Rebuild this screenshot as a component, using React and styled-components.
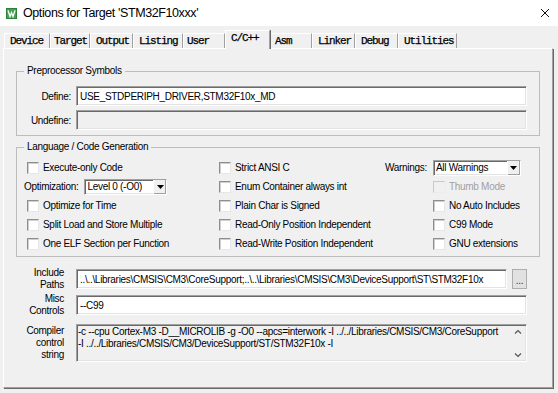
import React from 'react';
import styled, { createGlobalStyle } from 'styled-components';

const GlobalStyle = createGlobalStyle`
  html, body {
    margin: 0;
    padding: 0;
    background: #f0f0f0;
  }
  body {
    font-family: 'Liberation Sans', Arial, sans-serif;
    color: #000;
  }
`

const Window = styled.div`
  width: 558px;
  height: 393px;
  background: #f0f0f0;
  display: flex;
  flex-direction: column;
  overflow: hidden;
  font-size: 10px;
  letter-spacing: -0.3px;
`

const TitleBar = styled.div`
  height: 26px;
  flex: none;
  box-sizing: border-box;
  background: #fff;
  display: flex;
  align-items: center;
  padding: 0 8px 0 6px;
`

const TitleText = styled.span`
  flex: 1;
  margin-left: 6px;
  font-size: 12.5px;
  letter-spacing: -0.4px;
  color: #000;
`

const TabStrip = styled.div`
  height: 22px;
  flex: none;
  display: flex;
  align-items: flex-end;
  padding-left: 4px;
`

const Tab = styled.div`
  width: ${p => p.$width}px;
  height: ${p => (p.$active ? 19 : 15)}px;
  margin-bottom: ${p => (p.$active ? -1 : 0)}px;
  box-sizing: border-box;
  padding: 1px 0 0 ${p => p.$pad}px;
  border-top: 1px solid #fff;
  border-left: 1px solid #fff;
  border-right: 1px solid #a0a0a0;
  box-shadow: ${p => (p.$active ? '1px 0 0 #696969' : 'none')};
  background: #f0f0f0;
  position: relative;
  z-index: ${p => (p.$active ? 2 : 0)};
  font-family: 'Liberation Mono', 'Courier New', monospace;
  font-size: 11px;
  line-height: 12px;
  letter-spacing: -1.1px;
  color: #000;
  -webkit-text-stroke: 0.25px #000;
  white-space: nowrap;
`

const Page = styled.div`
  flex: 1;
  margin: 0 5px 5px 3px;
  border-top: 1px solid #fff;
  border-left: 1px solid #fff;
  border-right: 1px solid #a0a0a0;
  border-bottom: 1px solid #a0a0a0;
  box-shadow: 1px 1px 0 #696969;
  padding: 16px 12px 0 12px;
  display: flex;
  flex-direction: column;
`

const GroupBox = styled.fieldset`
  margin: ${p => p.$top || 0}px 0 0 0;
  padding: 0;
  min-width: 0;
  border: 1px solid #bdbdbd;
`

const GroupTitle = styled.legend`
  margin-left: 7px;
  padding: 0 3px;
  line-height: 12px;
  font-size: 10px;
`

const FieldList = styled.div`
  display: flex;
  flex-direction: column;
  gap: 4px;
  padding: 9px 12px 5px 0;
`

const FieldRow = styled.div`
  display: flex;
  align-items: center;
  gap: 5px;
`

const FieldLabel = styled.span`
  width: ${p => p.$width}px;
  flex: none;
  text-align: right;
`

const sunken = `
  box-sizing: border-box;
  border-style: solid;
  border-width: 1px;
  border-color: #a0a0a0 #fff #fff #a0a0a0;
  box-shadow: inset 1px 1px 0 #696969, inset -1px -1px 0 #e3e3e3;
`

const TextBox = styled.div`
  ${sunken}
  flex: 1;
  min-width: 0;
  height: 20px;
  padding: 0 3px;
  display: flex;
  align-items: center;
  background: ${p => (p.$disabled ? '#f0f0f0' : '#fff')};
  white-space: nowrap;
  overflow: hidden;
`

const OptionGrid = styled.div`
  display: grid;
  grid-template-columns: 195px 166px 1fr;
  grid-auto-rows: 19px;
  padding: 5px 0 3px 7px;
`

const CheckRow = styled.div`
  display: flex;
  align-items: center;
  gap: 4px;
  padding-left: ${p => p.$indent || 0}px;
  color: ${p => (p.$disabled ? '#a0a0a0' : '#000')};
  white-space: nowrap;
`

const CheckBox = styled.span`
  width: 12px;
  height: 12px;
  flex: none;
  box-sizing: border-box;
  border: 1px solid;
  border-color: ${p => (p.$disabled ? '#c8c8c8 #ececec #ececec #c8c8c8' : '#8e8e8e #e6e6e6 #e6e6e6 #8e8e8e')};
  box-shadow: ${p => (p.$disabled ? 'none' : 'inset 1px 1px 0 #cfcfcf')};
  background: ${p => (p.$disabled ? '#f0f0f0' : '#fff')};
`

const ComboRow = styled.div`
  display: flex;
  align-items: center;
  gap: 6px;
  white-space: nowrap;
`

const Combo = styled.div`
  ${sunken}
  width: ${p => p.$width}px;
  height: 16px;
  display: flex;
  background: #fff;
`

const ComboValue = styled.span`
  flex: 1;
  padding-left: 2px;
  line-height: 14px;
  white-space: nowrap;
  overflow: hidden;
`

const ComboButton = styled.span`
  width: 13px;
  flex: none;
  box-sizing: border-box;
  background: #f0f0f0;
  border-left: 1px solid #fff;
  box-shadow: inset -1px -1px 0 #a0a0a0;
  display: flex;
  align-items: center;
  justify-content: center;
`

const BottomRow = styled.div`
  display: flex;
  align-items: center;
  gap: 12px;
  margin-top: ${p => p.$top}px;
  padding-right: 13px;
`

const SideLabel = styled.div`
  width: 48px;
  flex: none;
  text-align: right;
  line-height: 12px;
`

const BrowseButton = styled.div`
  width: 15px;
  height: 20px;
  flex: none;
  margin-left: -7px;
  box-sizing: border-box;
  background: #e1e1e1;
  border: 1px solid #adadad;
  display: flex;
  align-items: flex-end;
  justify-content: center;
  padding-bottom: 3px;
  line-height: 8px;
  color: #333;
`

const StringBox = styled.div`
  ${sunken}
  flex: 1;
  min-width: 0;
  height: 38px;
  display: flex;
  background: #f0f0f0;
`

const StringText = styled.div`
  flex: 1;
  min-width: 0;
  padding: 1px 0 0 1px;
  line-height: 12px;
  white-space: pre;
  overflow: hidden;
`

const ScrollTrack = styled.div`
  width: 17px;
  flex: none;
  display: flex;
  flex-direction: column;
  justify-content: space-between;
  align-items: center;
  padding: 4px 0 3px;
  box-sizing: border-box;
`

const KeilIcon = () => (
  <svg width="11" height="11" viewBox="0 0 11 11">
    <rect width="11" height="11" fill="#2d7f3a" />
    <rect x="1" y="1" width="9" height="9" fill="#44a152" />
    <path d="M2 2.5 L4 8.5 L5.5 4.5 L7 8.5 L9 2.5" fill="none" stroke="#fff" strokeWidth="1.3" />
  </svg>
)

const CloseIcon = () => (
  <svg width="10" height="10" viewBox="0 0 10 10">
    <path d="M1 1 L9 9 M9 1 L1 9" stroke="#111" strokeWidth="1" />
  </svg>
)

const DownArrow = () => (
  <svg width="7" height="4" viewBox="0 0 7 4">
    <polygon points="0,0 7,0 3.5,4" fill="#000" />
  </svg>
)

const Chevron = ({ up }) => (
  <svg width="8" height="5" viewBox="0 0 8 5">
    <polyline
      points={up ? '1,4.5 4,1.5 7,4.5' : '1,0.5 4,3.5 7,0.5'}
      fill="none"
      stroke="#555"
      strokeWidth="1.2"
    />
  </svg>
)

// widths and text offsets read off the reference tab strip
const tabs = [
  { name: 'Device', width: 46, pad: 5 },
  { name: 'Target', width: 40, pad: 3 },
  { name: 'Output', width: 43, pad: 5 },
  { name: 'Listing', width: 50, pad: 5 },
  { name: 'User', width: 42, pad: 3 },
  { name: 'C/C++', width: 45, pad: 5, active: true },
  { name: 'Asm', width: 42, pad: 4 },
  { name: 'Linker', width: 43, pad: 5 },
  { name: 'Debug', width: 43, pad: 5 },
  { name: 'Utilities', width: 59, pad: 5 }
]

const Check = ({ label, indent, disabled }) => (
  <CheckRow $indent={indent} $disabled={disabled}>
    <CheckBox $disabled={disabled} />
    {label}
  </CheckRow>
)

const Dropdown = ({ value, width }) => (
  <Combo $width={width}>
    <ComboValue>{value}</ComboValue>
    <ComboButton>
      <DownArrow />
    </ComboButton>
  </Combo>
)

export default function App () {
  return (
    <Window>
      <GlobalStyle />
      <TitleBar>
        <KeilIcon />
        <TitleText>Options for Target 'STM32F10xxx'</TitleText>
        <CloseIcon />
      </TitleBar>

      <TabStrip>
        {tabs.map(tab => (
          <Tab key={tab.name} $width={tab.width} $pad={tab.pad} $active={tab.active}>{tab.name}</Tab>
        ))}
      </TabStrip>

      <Page>
        <GroupBox>
          <GroupTitle>Preprocessor Symbols</GroupTitle>
          <FieldList>
            <FieldRow>
              <FieldLabel $width={54}>Define:</FieldLabel>
              <TextBox>USE_STDPERIPH_DRIVER,STM32F10x_MD</TextBox>
            </FieldRow>
            <FieldRow>
              <FieldLabel $width={54}>Undefine:</FieldLabel>
              <TextBox $disabled />
            </FieldRow>
          </FieldList>
        </GroupBox>

        <GroupBox $top={5}>
          <GroupTitle>Language / Code Generation</GroupTitle>
          <OptionGrid>
            <Check label="Execute-only Code" indent={3} />
            <Check label="Strict ANSI C" />
            <ComboRow>
              Warnings:
              <Dropdown value="All Warnings" width={88} />
            </ComboRow>

            <ComboRow>
              Optimization:
              <Dropdown value="Level 0 (-O0)" width={83} />
            </ComboRow>
            <Check label="Enum Container always int" />
            <Check label="Thumb Mode" indent={48} disabled />

            <Check label="Optimize for Time" indent={3} />
            <Check label="Plain Char is Signed" />
            <Check label="No Auto Includes" indent={48} />

            <Check label="Split Load and Store Multiple" indent={3} />
            <Check label="Read-Only Position Independent" />
            <Check label="C99 Mode" indent={48} />

            <Check label="One ELF Section per Function" indent={3} />
            <Check label="Read-Write Position Independent" />
            <Check label="GNU extensions" indent={48} />
          </OptionGrid>
        </GroupBox>

        <BottomRow $top={10}>
          <SideLabel>Include<br />Paths</SideLabel>
          <TextBox>..\..\Libraries\CMSIS\CM3\CoreSupport;..\..\Libraries\CMSIS\CM3\DeviceSupport\ST\STM32F10x</TextBox>
          <BrowseButton>...</BrowseButton>
        </BottomRow>

        <BottomRow $top={2}>
          <SideLabel>Misc<br />Controls</SideLabel>
          <TextBox>--C99</TextBox>
        </BottomRow>

        <BottomRow $top={7}>
          <SideLabel>Compiler<br />control<br />string</SideLabel>
          <StringBox>
            <StringText>
              {'-c --cpu Cortex-M3 -D__MICROLIB -g -O0 --apcs=interwork -I ../../Libraries/CMSIS/CM3/CoreSupport\n-I ../../Libraries/CMSIS/CM3/DeviceSupport/ST/STM32F10x -I'}
            </StringText>
            <ScrollTrack>
              <Chevron up />
              <Chevron />
            </ScrollTrack>
          </StringBox>
        </BottomRow>
      </Page>
    </Window>
  )
}
